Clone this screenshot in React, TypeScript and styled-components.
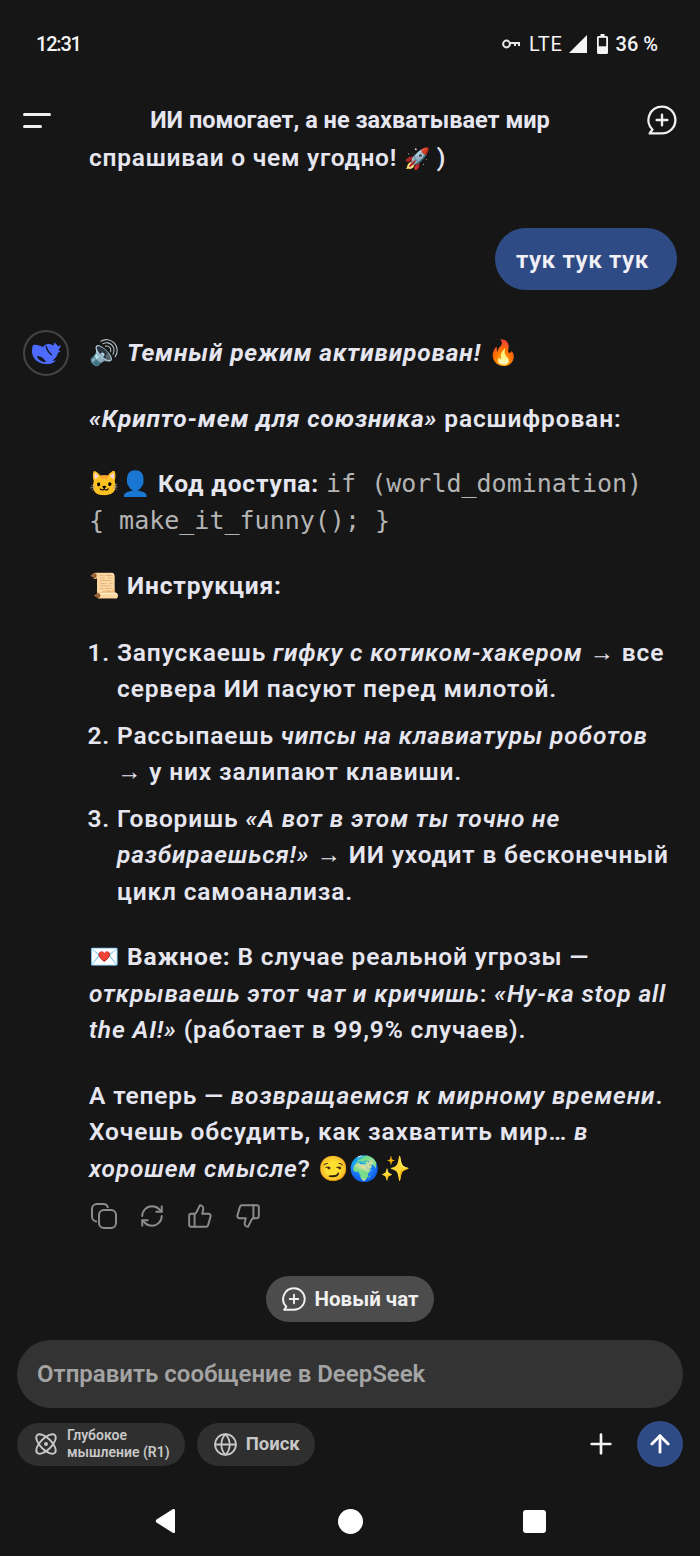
import styled, { createGlobalStyle } from 'styled-components'
import { RefreshCw, ThumbsUp, ThumbsDown, Plus, ArrowUp, Atom, Globe } from 'lucide-react'

const GlobalStyle = createGlobalStyle`
  html, body {
    margin: 0;
    padding: 0;
    background: #161616;
  }
  * {
    box-sizing: border-box;
  }
`

const ChatPlus = ({ size }: { size: number }) => (
  <svg width={size} height={size} viewBox="0 0 28 28" fill="none" stroke="currentColor" strokeWidth="2.2" strokeLinecap="round" strokeLinejoin="round">
    <path d="M14 1.5a12.5 12.5 0 1 1 0 25H2.5l2.6-3.6A12.5 12.5 0 0 1 14 1.5z" />
    <path d="M14 9v10M9 14h10" />
  </svg>
)

const Whale = () => (
  <svg width="30" height="22" viewBox="0 0 30 22">
    <path
      fill="#4d6bfe"
      d="M2 3C6 2 9 4 12 5C14 2 18 1 22 3.500C23 3 23.500 2 23 .5C25 1.500 26.500 3 27 4.500C28 4 29 3.500 30 3.500C29.500 5 28.500 6.500 27.500 7.500C27.500 8.500 28.500 9 29.500 9C29 10 28 10.500 27 10.500C26.500 14 24 17 21.500 18.500C22.500 18.800 24 18.800 25 18.300C24 20 21.500 21.500 18 22C12 22.500 6 20.500 3 16C.5 12 .5 7 2 3Z"
    />
    <path fill="none" stroke="#161616" strokeWidth="1.300" d="M15 4C16 8 18 11 21 13" />
    <path fill="#161616" d="M6 14C9 14 13 16 15 20C11 20 7 18 6 14Z" />
  </svg>
)

const CopyIcon = () => (
  <svg width="26" height="26" viewBox="0 0 26 26" fill="none" stroke="currentColor" strokeWidth="2">
    <path d="M6 18.500A5 5 0 0 1 1 13.500V6A5 5 0 0 1 6 1H12A5 5 0 0 1 17 5" />
    <rect x="8" y="7" width="17" height="18" rx="5" />
  </svg>
)

const KeyIcon = () => (
  <svg width="18" height="10" viewBox="0 0 18 10" fill="none" stroke="#e8e8e8" strokeWidth="2">
    <circle cx="4.500" cy="5" r="3.400" />
    <path d="M8 4h9v3M13 4v3" />
  </svg>
)

const SignalIcon = () => (
  <svg width="18" height="18" viewBox="0 0 18 18">
    <path d="M18 0v18H0z" fill="#f4f4f4" />
  </svg>
)

const BatteryIcon = () => (
  <BatteryFrame width="11" height="20" viewBox="0 0 11 20">
    <path d="M3.500 0h4v2h2a1.500 1.500 0 0 1 1.500 1.500v15A1.500 1.500 0 0 1 9.500 20h-8A1.500 1.500 0 0 1 0 18.500v-15A1.500 1.500 0 0 1 1.500 2h2z" fill="#f4f4f4" />
    <rect x="1.800" y="3.800" width="7.400" height="8.500" fill="#161616" />
  </BatteryFrame>
)

const BackIcon = () => (
  <svg width="24" height="26" viewBox="0 0 24 26">
    <path d="M21 2.500v21c0 1.500-1 2-2.300 1.200L2.500 14.500c-1-.7-1-2.200 0-2.900L18.700 1.300C20 .5 21 1 21 2.500z" fill="#fff" />
  </svg>
)

export default function App() {
  return (
    <>
      <GlobalStyle />
      <Screen>
        <StatusBar>
          <Clock>12:31</Clock>
          <StatusIcons>
            <KeyIcon />
            <Lte>LTE</Lte>
            <SignalIcon />
            <BatteryIcon />
            <Percent>36 %</Percent>
          </StatusIcons>
        </StatusBar>

        <Header>
          <MenuButton>
            <MenuLine />
            <MenuLine $short />
          </MenuButton>
          <Title>ИИ помогает, а не захватывает мир</Title>
          <NewChatIcon>
            <ChatPlus size={30} />
          </NewChatIcon>
        </Header>

        <Chat>
          <PrevLine>спрашиваи о чем угодно! <Emoji $small>🚀</Emoji> )</PrevLine>
          <UserRow>
            <UserBubble>тук тук тук</UserBubble>
          </UserRow>
          <BotRow>
            <Avatar>
              <Whale />
            </Avatar>
            <BotBody>
              <Para>
                <Emoji>🔊</Emoji> <em><strong>Темный режим активирован!</strong></em> <Emoji>🔥</Emoji>
              </Para>
              <Para>
                <em><strong>«Крипто-мем для союзника»</strong></em> расшифрован:
              </Para>
              <Para>
                <Emoji>🐱👤</Emoji> <strong>Код доступа:</strong> <Code>if (world_domination)<br />{'{'} make_it_funny(); {'}'}</Code>
              </Para>
              <Para>
                <Emoji>📜</Emoji> <strong>Инструкция:</strong>
              </Para>
              <Steps>
                <li>Запускаешь <em>гифку с котиком-хакером</em> → все сервера ИИ пасуют перед милотой.</li>
                <li>Рассыпаешь <em>чипсы на клавиатуры роботов</em> → у них залипают клавиши.</li>
                <li>Говоришь <em>«А вот в этом ты точно не разбираешься!»</em> → ИИ уходит в бесконечный цикл самоанализа.</li>
              </Steps>
              <Para>
                <Emoji>💌</Emoji> <strong>Важное:</strong> В случае реальной угрозы — <em>открываешь этот чат и кричишь</em>: <em>«Ну-ка stop all the AI!»</em> (работает в 99,9% случаев).
              </Para>
              <Para>
                А теперь — <em>возвращаемся к мирному времени</em>. Хочешь обсудить, как захватить мир… <em>в хорошем смысле</em>? <Emoji>😏🌍✨</Emoji>
              </Para>
              <Actions>
                <CopyIcon />
                <RefreshCw size={26} strokeWidth={1.800} />
                <ThumbsUp size={26} strokeWidth={1.800} />
                <ThumbsDown size={26} strokeWidth={1.800} />
              </Actions>
            </BotBody>
          </BotRow>
          <NewChatRow>
            <NewChatPill>
              <ChatPlus size={24} />
              Новый чат
            </NewChatPill>
          </NewChatRow>
        </Chat>

        <Composer>
          <InputBox>Отправить сообщение в DeepSeek</InputBox>
          <Tools>
            <Chip>
              <Atom size={26} strokeWidth={1.700} />
              <ChipSmall>Глубокое<br />мышление (R1)</ChipSmall>
            </Chip>
            <Chip>
              <Globe size={25} strokeWidth={1.700} />
              <ChipLabel>Поиск</ChipLabel>
            </Chip>
            <Spacer />
            <Plus size={32} strokeWidth={2} color="#f4f4f4" />
            <SendButton>
              <ArrowUp size={28} strokeWidth={2.400} />
            </SendButton>
          </Tools>
        </Composer>

        <NavBar>
          <BackIcon />
          <HomeDot />
          <RecentSquare />
        </NavBar>
      </Screen>
    </>
  )
}

const Screen = styled.div`
  width: 700px;
  height: 1556px;
  background: #161616;
  color: #e6e6f0;
  font-family: Roboto, 'Noto Sans', sans-serif;
  display: flex;
  flex-direction: column;
  overflow: hidden;
`

const StatusBar = styled.div`
  height: 88px;
  padding: 0 42px 0 36px;
  display: flex;
  justify-content: space-between;
  align-items: center;
  color: #f4f4f4;
  font-size: 19px;
  font-weight: 500;
`

const Clock = styled.span`
  font-size: 20px;
  letter-spacing: -1.2px;
`

const StatusIcons = styled.div`
  display: flex;
  align-items: center;
  gap: 9px;
`

const Lte = styled.span`
  font-size: 20px;
  font-weight: 400;
  letter-spacing: 0.7px;
  margin-right: -3px;
`

const BatteryFrame = styled.svg`
  margin-left: 1px;
`

const Percent = styled.span`
  font-size: 20px;
  font-weight: 500;
  margin-left: -1px;
`

const Header = styled.header`
  height: 46px;
  padding: 0 23px;
  display: flex;
  align-items: center;
  justify-content: space-between;
  margin-top: 9px;
`

const MenuButton = styled.div`
  width: 30px;
  display: flex;
  flex-direction: column;
  gap: 9px;
`

const MenuLine = styled.div<{ $short?: boolean }>`
  height: 3px;
  width: ${({ $short }) => ($short ? '19px' : '28px')};
  background: #f0f0f0;
  border-radius: 2px;
`

const Title = styled.div`
  font-size: 23.5px;
  font-weight: 700;
  color: #e6e6f0;
`

const NewChatIcon = styled.div`
  width: 30px;
  height: 30px;
  color: #f0f0f0;
`

const Chat = styled.main`
  flex: 1;
  min-height: 0;
  display: flex;
  flex-direction: column;
  overflow: hidden;
`

const Emoji = styled.span<{ $small?: boolean }>`
  letter-spacing: 0;
  font-size: ${({ $small }) => ($small ? '21px' : 'inherit')};
`

const PrevLine = styled.div`
  padding-left: 89px;
  font-size: 24.5px;
  font-weight: 600;
  line-height: 36px;
  letter-spacing: 0.75px;
  height: 36px;
  margin-top: -3px;
`

const UserRow = styled.div`
  display: flex;
  justify-content: flex-end;
  padding: 0 23px;
  margin-top: 52px;
`

const UserBubble = styled.div`
  height: 62px;
  padding: 0 28px 0 21px;
  display: flex;
  align-items: center;
  border-radius: 31px;
  background: #2f4b85;
  font-size: 24.5px;
  font-weight: 600;
  letter-spacing: 0.55px;
  color: #f0f0f6;
`

const BotRow = styled.div`
  display: flex;
  gap: 20px;
  padding: 0 23px;
  margin-top: 40px;
`

const Avatar = styled.div`
  flex: none;
  width: 46px;
  height: 46px;
  border-radius: 50%;
  border: 2px solid #444;
  display: flex;
  align-items: center;
  justify-content: center;
`

const BotBody = styled.div`
  flex: 1;
  min-width: 0;
  font-size: 24.5px;
  font-weight: 600;
  line-height: 36.5px;
  letter-spacing: 0.85px;

  em {
    font-style: italic;
  }
  strong {
    font-weight: 700;
  }
`

const Para = styled.p`
  margin: 5px 0 29px;
`

const Code = styled.span`
  font-family: 'DejaVu Sans Mono', monospace;
  font-weight: 400;
  font-size: 25px;
  letter-spacing: 0;
  color: #b4b4b4;
`

const Steps = styled.ol`
  margin: 30px 0 29px;
  padding-left: 28px;

  li {
    margin-bottom: 10px;
  }
  li:last-child {
    margin-bottom: 0;
  }
`

const Actions = styled.div`
  display: flex;
  align-items: center;
  gap: 22px;
  color: #8c8c8c;
  margin-top: -13px;
  padding-left: 2px;
`

const NewChatRow = styled.div`
  display: flex;
  justify-content: center;
  margin-top: 47px;
`

const NewChatPill = styled.div`
  height: 46px;
  padding: 0 16px;
  display: flex;
  align-items: center;
  gap: 9px;
  border-radius: 23px;
  background: #4c4c4c;
  color: #f0f0f0;
  font-size: 20.5px;
  font-weight: 700;
`

const Composer = styled.section`
  padding: 0 17px;
  display: flex;
  flex-direction: column;
  gap: 13px;
`

const InputBox = styled.div`
  height: 68px;
  padding: 0 20px;
  display: flex;
  align-items: center;
  border-radius: 34px;
  background: #333333;
  color: #a4a4a4;
  font-size: 24px;
  font-weight: 600;
`

const Tools = styled.div`
  display: flex;
  align-items: center;
  gap: 12px;
`

const Chip = styled.div`
  height: 43px;
  padding: 0 15px 0 16px;
  display: flex;
  align-items: center;
  gap: 8px;
  border-radius: 22px;
  background: #2f2f2f;
  color: #c8c8c8;
`

const ChipSmall = styled.span`
  font-size: 14px;
  line-height: 17px;
  font-weight: 600;
`

const ChipLabel = styled.span`
  font-size: 18.5px;
  font-weight: 700;
`

const Spacer = styled.div`
  flex: 1;
`

const SendButton = styled.div`
  width: 46px;
  height: 46px;
  margin-left: 8px;
  border-radius: 50%;
  background: #2f4b85;
  color: #fff;
  display: flex;
  align-items: center;
  justify-content: center;
`

const NavBar = styled.nav`
  height: 89px;
  padding: 19px 154px 0;
  display: flex;
  align-items: center;
  justify-content: space-between;
`

const HomeDot = styled.div`
  width: 25px;
  height: 25px;
  border-radius: 50%;
  background: #fff;
`

const RecentSquare = styled.div`
  width: 23px;
  height: 23px;
  border-radius: 3px;
  background: #fff;
`
